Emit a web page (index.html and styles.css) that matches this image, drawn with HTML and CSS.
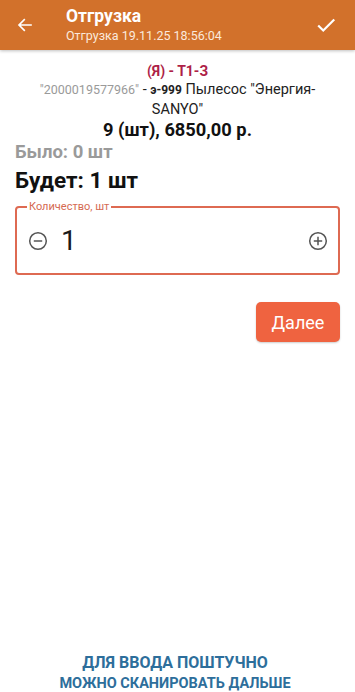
FILE: index.html
```html
<!DOCTYPE html>
<html>
<head>
<meta charset="utf-8">
<link rel="stylesheet" href="styles.css">
</head>
<body>
<div class="app">
  <header class="topbar">
    <div class="back">
      <svg width="18" height="18" viewBox="0 0 24 24"><path d="M20 12H5M11 5l-7 7 7 7" fill="none" stroke="#fff" stroke-width="2.2" stroke-linecap="square"/></svg>
    </div>
    <div class="titles">
      <div class="title">Отгрузка</div>
      <div class="subtitle">Отгрузка 19.11.25 18:56:04</div>
    </div>
    <div class="check">
      <svg width="22" height="22" viewBox="0 0 24 24"><path d="M3.5 12.5l5.5 5.5L21 6" fill="none" stroke="#fff" stroke-width="2.4"/></svg>
    </div>
  </header>
  <main class="content">
    <div class="product">
      <div class="cell">(Я) - Т1-З</div>
      <div class="name"><span class="barcode">"2000019577966"</span> - <span class="art">э-999</span> Пылесос "Энергия-SANYO"</div>
      <div class="price">9 (шт), 6850,00 р.</div>
    </div>
    <div class="was">Было: 0 шт</div>
    <div class="will">Будет: 1 шт</div>
    <fieldset class="qty">
      <legend>Количество, шт</legend>
      <div class="qty-row">
        <svg class="circ" width="20" height="20" viewBox="0 0 20 20"><circle cx="10" cy="10" r="8.3" fill="none" stroke="#555" stroke-width="1.5"/><path d="M5.8 10h8.4" stroke="#555" stroke-width="1.5"/></svg>
        <span class="val">1</span>
        <svg class="circ" width="20" height="20" viewBox="0 0 20 20"><circle cx="10" cy="10" r="8.3" fill="none" stroke="#555" stroke-width="1.5"/><path d="M5.8 10h8.4M10 5.8v8.4" stroke="#555" stroke-width="1.5"/></svg>
      </div>
    </fieldset>
    <div class="actions">
      <button class="next">Далее</button>
    </div>
  </main>
  <footer class="hint">
    <div class="l1">ДЛЯ ВВОДА ПОШТУЧНО</div>
    <div class="l2">МОЖНО СКАНИРОВАТЬ ДАЛЬШЕ</div>
  </footer>
</div>
</body>
</html>
```
FILE: styles.css
```css
html, body { margin: 0; padding: 0; }
body { font-family: Roboto, "Liberation Sans", sans-serif; background: #fff; }
.app { width: 355px; height: 692px; display: flex; flex-direction: column; overflow: hidden; }
.topbar {
  height: 50px; background: #D2712B; color: #fff;
  display: flex; align-items: center; box-shadow: 0 1px 3px rgba(0,0,0,0.25);
  flex-shrink: 0;
}
.back { width: 66px; padding-left: 16px; box-sizing: border-box; display: flex; align-items: center; height: 50px; }
.titles { flex: 1; }
.title { font-size: 17.5px; font-weight: 700; line-height: 20px; margin-top: -1px; }
.subtitle { font-size: 12.5px; line-height: 16px; margin-top: 2px; color: #fbe9dc; }
.check { width: 50px; display: flex; justify-content: center; padding-right: 4px; }
.content { flex: 1; padding: 0 15px; }
.product { text-align: center; padding-top: 12px; }
.cell { color: #AE1F48; font-weight: 700; font-size: 14px; line-height: 18px; }
.name { font-size: 14.5px; line-height: 19px; color: #222; padding: 0 12px; }
.barcode { color: #9a9a9a; font-size: 12.5px; }
.art { font-weight: 700; font-size: 12px; }
.price { font-size: 18.3px; font-weight: 700; line-height: 22px; color: #111; }
.was { font-size: 18.5px; font-weight: 700; color: #9a9a9a; line-height: 22px; }
.will { font-size: 22.5px; font-weight: 700; color: #111; line-height: 28px; margin-top: 3px; }
.qty {
  margin: 7px 0 0 0; padding: 0 13px 0 12px; border: 2px solid #DE6A52; border-radius: 4px;
  height: 74px; box-sizing: border-box;
}
.qty legend { font-size: 11px; color: #D56A52; padding: 0 2px; margin-left: -2px; line-height: 12px; }
.qty-row { display: flex; align-items: center; height: 58px; margin-top: -1px; }
.circ { margin-left: -1px; }
.val { flex: 1; font-size: 28px; color: #1a1a1a; padding-left: 13px; line-height: 32px; }
.qty-row .circ:last-child { margin-right: -3px; }
.actions { display: flex; justify-content: flex-end; margin-top: 27px; }
.next {
  width: 84px; height: 40px; background: #EF6340; color: #fff; border: none; border-radius: 5px;
  font-family: Roboto, "Liberation Sans", sans-serif; font-size: 18px; box-shadow: 0 1px 2px rgba(0,0,0,0.2);
}
.hint {
  text-align: center; color: #2D6E9B; font-weight: 700; line-height: 21px;
  margin-bottom: -2px; padding-right: 5px;
}
.l1 { font-size: 16px; }
.l2 { font-size: 14.5px; }
```
